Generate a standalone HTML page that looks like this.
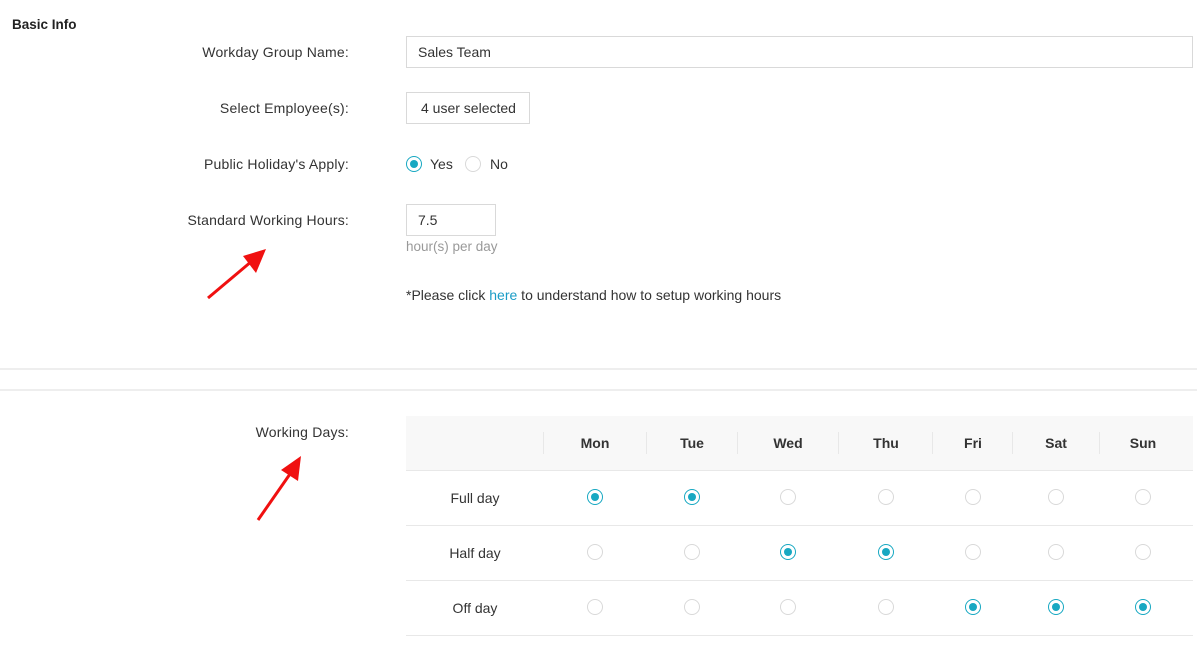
<!DOCTYPE html>
<html><head><style>
*{margin:0;padding:0;box-sizing:border-box}
body{width:1197px;height:663px;background:#fff;font-family:"Liberation Sans",sans-serif;font-size:14px;color:#333;position:relative;overflow:hidden}
.a{position:absolute;white-space:nowrap}
.lbl{position:absolute;right:848px;font-size:14px;color:#333;letter-spacing:0.2px}
.box{position:absolute;border:1px solid #d9d9d9;background:#fff;padding-left:11px;font-size:14px;color:#333}
.r{position:absolute;width:16px;height:16px;border:1px solid #d9d9d9;border-radius:50%;background:#fff}
.r.on{border-color:#17a8c2}
.r.on::after{content:"";position:absolute;left:3px;top:3px;width:8px;height:8px;border-radius:50%;background:#17a8c2}
.hl{position:absolute;left:0;width:1197px;height:2px;background:#eee}
.rowl{position:absolute;left:406px;width:787px;height:1px;background:#e8e8e8}
.sep{position:absolute;top:432px;width:1px;height:22px;background:#e8e8e8}
.th{position:absolute;top:435px;font-weight:bold;font-size:14px;color:#333;transform:translateX(-50%)}
.td{position:absolute;left:475px;transform:translateX(-50%);font-size:14px}
</style></head><body>
<div class="a" style="left:12px;top:17px;font-weight:bold;font-size:13.5px;color:#222">Basic Info</div>

<div class="lbl" style="top:44px">Workday Group Name:</div>
<div class="box" style="left:406px;top:36px;width:787px;height:32px;line-height:30px">Sales Team</div>

<div class="lbl" style="top:100px">Select Employee(s):</div>
<div class="box" style="left:406px;top:92px;width:124px;height:32px;line-height:30px;padding-left:14px">4 user selected</div>

<div class="lbl" style="top:156px">Public Holiday's Apply:</div>
<div class="r on" style="left:406px;top:156px"></div>
<div class="a" style="left:430px;top:156px">Yes</div>
<div class="r" style="left:465px;top:156px"></div>
<div class="a" style="left:490px;top:156px">No</div>

<div class="lbl" style="top:212px">Standard Working Hours:</div>
<div class="box" style="left:406px;top:204px;width:90px;height:32px;line-height:30px">7.5</div>
<div class="a" style="left:406px;top:239px;color:#999;font-size:13.5px">hour(s) per day</div>
<div class="a" style="left:406px;top:287px">*Please click <span style="color:#1a9cc6">here</span> to understand how to setup working hours</div>

<svg class="a" style="left:200px;top:245px" width="70" height="60"><line x1="8" y1="53" x2="52" y2="16" stroke="#f01010" stroke-width="3"/><polygon points="66,4 43,11 56,28" fill="#f01010"/></svg>

<div class="hl" style="top:368px"></div>
<div class="hl" style="top:389px"></div>

<div class="lbl" style="top:424px">Working Days:</div>
<svg class="a" style="left:250px;top:452px" width="60" height="75"><line x1="8" y1="68" x2="40" y2="22" stroke="#f01010" stroke-width="3"/><polygon points="51,4 31,18 48,29" fill="#f01010"/></svg>

<div class="a" style="left:406px;top:416px;width:787px;height:54px;background:#f8f8f8"></div>
<div class="sep" style="left:543px"></div><div class="sep" style="left:646px"></div><div class="sep" style="left:737px"></div><div class="sep" style="left:838px"></div><div class="sep" style="left:932px"></div><div class="sep" style="left:1012px"></div><div class="sep" style="left:1099px"></div>
<div class="th" style="left:595px">Mon</div><div class="th" style="left:692px">Tue</div><div class="th" style="left:788px">Wed</div><div class="th" style="left:886px">Thu</div><div class="th" style="left:973px">Fri</div><div class="th" style="left:1056px">Sat</div><div class="th" style="left:1143px">Sun</div>
<div class="rowl" style="top:470px"></div><div class="rowl" style="top:525px"></div><div class="rowl" style="top:580px"></div><div class="rowl" style="top:635px"></div>
<div class="td" style="top:490px">Full day</div>
<div class="td" style="top:545px">Half day</div>
<div class="td" style="top:600px">Off day</div>

<div class="r on" style="left:587px;top:489px"></div><div class="r on" style="left:684px;top:489px"></div><div class="r" style="left:780px;top:489px"></div><div class="r" style="left:878px;top:489px"></div><div class="r" style="left:965px;top:489px"></div><div class="r" style="left:1048px;top:489px"></div><div class="r" style="left:1135px;top:489px"></div>
<div class="r" style="left:587px;top:544px"></div><div class="r" style="left:684px;top:544px"></div><div class="r on" style="left:780px;top:544px"></div><div class="r on" style="left:878px;top:544px"></div><div class="r" style="left:965px;top:544px"></div><div class="r" style="left:1048px;top:544px"></div><div class="r" style="left:1135px;top:544px"></div>
<div class="r" style="left:587px;top:599px"></div><div class="r" style="left:684px;top:599px"></div><div class="r" style="left:780px;top:599px"></div><div class="r" style="left:878px;top:599px"></div><div class="r on" style="left:965px;top:599px"></div><div class="r on" style="left:1048px;top:599px"></div><div class="r on" style="left:1135px;top:599px"></div>
</body></html>
